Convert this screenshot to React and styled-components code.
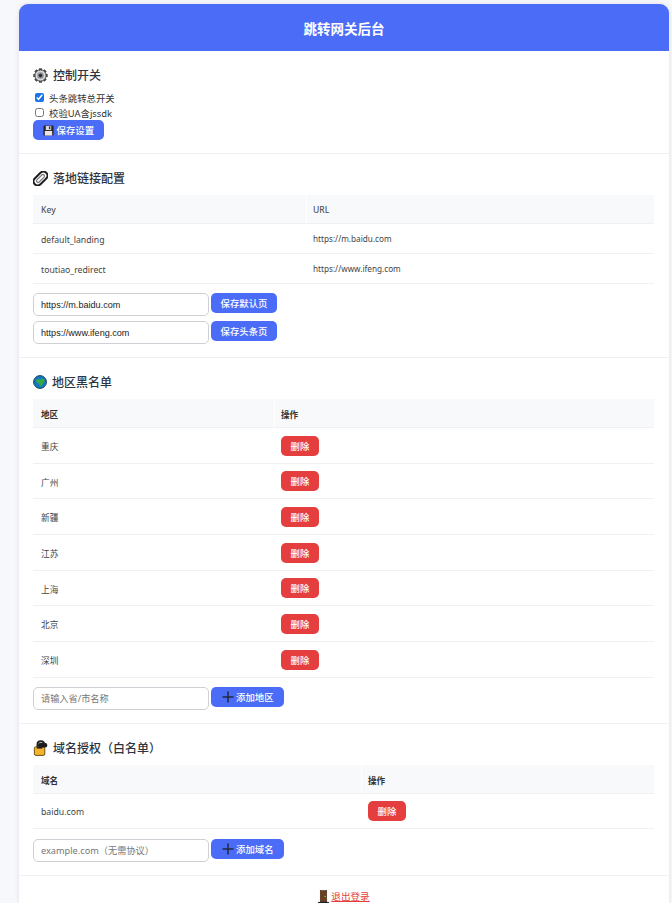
import React from "react";
import styled, { createGlobalStyle } from "styled-components";

const FONT = `"Noto Sans", "Noto Sans CJK SC", sans-serif`;

const Global = createGlobalStyle`
  html, body { margin: 0; padding: 0; background: #f6f8fb; }
  body { font-family: ${FONT}; height: 903px; overflow: hidden; }
  * { box-sizing: border-box; }
`;

const Page = styled.div`
  padding: 4px 3px 0 19px;
`;
const Card = styled.main`
  background: #fff;
  border-radius: 9px 9px 0 0;
  box-shadow: 0 0 5px rgba(0, 0, 0, 0.1);
`;
const Header = styled.header`
  height: 47px;
  background: #4a6cf7;
  color: #fff;
  border-radius: 9px 9px 0 0;
  display: flex;
  align-items: center;
  justify-content: center;
  font-size: 13.5px;
  font-weight: 700;
`;
const Section = styled.section`
  padding: 14px 15px 0 14px;
  height: ${(p) => p.$height}px;
  border-bottom: 1px solid #edeff2;
`;
const Heading = styled.h2`
  margin: 0 0 ${(p) => p.$gap ?? 8}px;
  height: 20px;
  display: flex;
  align-items: center;
  gap: 5px;
  font-size: 12px;
  line-height: 19px;
  font-weight: 500;
  color: #2d3440;
`;
const CheckRow = styled.label`
  display: flex;
  align-items: center;
  height: 15px;
  font-size: 9.4px;
  color: #333;
`;
const Check = styled.input`
  width: 9px;
  height: 9px;
  margin: 0 5px 0 2px;
  accent-color: #1a73e8;
`;
const Button = styled.button`
  height: 20px;
  border: 0;
  border-radius: 5px;
  padding: 0 ${(p) => p.$pad ?? 9.5}px;
  background: ${(p) => (p.$danger ? "#e53e3e" : "#4a6cf7")};
  color: #fff;
  font-family: ${FONT};
  font-size: 9.4px;
  font-weight: 500;
  display: inline-flex;
  align-items: center;
  gap: 3px;
  white-space: nowrap;
  vertical-align: top;
`;
const Table = styled.table`
  width: 621px;
  table-layout: fixed;
  border-collapse: separate;
  border-spacing: 0;
  margin-bottom: ${(p) => p.$gap ?? 9}px;
`;
const Th = styled.th`
  height: 29px;
  padding: 2px 6px 0 8px;
  background: #f8f9fb;
  border-bottom: 1px solid #eef0f3;
  text-align: left;
  font-size: 8.6px;
  font-weight: ${(p) => (p.$light ? 500 : 700)};
  color: ${(p) => (p.$light ? "#555" : "#333")};
  & + & {
    border-left: 1px solid #fff;
    padding-left: 6px;
  }
`;
const Td = styled.td`
  height: ${(p) => p.$h}px;
  padding: 2px 7px 0 8px;
  border-bottom: 1px solid #eef0f3;
  font-size: 8.7px;
  color: #444;
`;
const ValueTd = styled(Td)`
  padding: 0 7px;
  font-size: 8.2px;
`;
const ActionTd = styled(Td)`
  padding: 0 7px;
`;
const Form = styled.div`
  display: flex;
  align-items: flex-start;
  gap: 2px;
  margin-bottom: ${(p) => p.$gap ?? 0}px;
`;
const Input = styled.input`
  width: 176px;
  height: 23px;
  padding: 0 7px;
  border: 1px solid #cdd1d6;
  border-radius: 5px;
  background: #fff;
  font-family: "Liberation Sans", "Noto Sans CJK SC", sans-serif;
  font-size: 9.1px;
  color: #222;
  &::placeholder { color: #777; font-family: ${FONT}; font-size: 9.2px; }
`;
const Footer = styled.footer`
  display: flex;
  justify-content: center;
  align-items: center;
  gap: 2px;
  padding-top: 13px;
  font-size: 9.6px;
`;
const Logout = styled.a`
  color: #e53e3e;
  text-decoration: underline;
`;

const teeth = [0, 45, 90, 135, 180, 225, 270, 315];
const Gear = () => (
  <svg width="15" height="15" viewBox="0 0 24 24">
    {teeth.map((a) => (
      <rect key={a} x="9.5" y="0.5" width="5" height="5" fill="#444" transform={`rotate(${a} 12 12)`} />
    ))}
    <circle cx="12" cy="12" r="9" fill="#d9dade" stroke="#444" strokeWidth="1.6" />
    <circle cx="12" cy="12" r="5.6" fill="#8c8e94" stroke="#c4c5c9" strokeWidth="1" />
    <circle cx="12" cy="12" r="2.8" fill="#2c2c30" />
  </svg>
);
const Clip = () => (
  <svg width="15" height="15" viewBox="0 0 24 24" fill="none">
    <g transform="rotate(45 12 12)">
      <rect x="5.5" y="-1" width="13" height="26" rx="6.5" stroke="#1d1d20" strokeWidth="3.2" />
      <rect x="9.5" y="4" width="5" height="16" rx="2.5" stroke="#77787d" strokeWidth="2" />
    </g>
  </svg>
);
const Globe = () => (
  <svg width="14" height="14" viewBox="0 0 24 24">
    <circle cx="12" cy="12" r="11" fill="#1578bd" stroke="#0b3c63" strokeWidth="1.6" />
    <path fill="#35a84a" d="M5 10c2-3 5-3 7-2 3-2 6-2 8 1 .5 2-2 4-3 5-1 3-3 5-4 6-1-3-3-5-4-6-2-1-4-2-4-4z" />
  </svg>
);
const LockKey = () => (
  <svg width="15" height="16" viewBox="0 0 24 26">
    <path fill="none" stroke="#222" strokeWidth="3" d="M7 13V7C7 3.500 9.500 2 12.500 2S18 3.500 18 7v3" />
    <rect x="2" y="11" width="17" height="14" rx="2.500" fill="#f4b32a" stroke="#5d430c" strokeWidth="1.500" />
    <rect x="8" y="5" width="15" height="7" rx="3" fill="#1c1c1f" />
    <rect x="6" y="11" width="9" height="3" fill="#222" />
  </svg>
);
const Floppy = () => (
  <svg width="11" height="11" viewBox="0 0 24 24">
    <rect x="1" y="1" width="22" height="22" rx="2" fill="#222" />
    <rect x="6" y="2" width="12" height="9" fill="#d7d7de" />
    <rect x="4" y="13" width="16" height="10" fill="#efe3e6" />
    <rect x="13" y="3" width="3" height="6" fill="#333" />
  </svg>
);
const PlusIcon = styled.svg`
  margin-left: 1px;
  margin-right: -1px;
`;
const Plus = () => (
  <PlusIcon width="12" height="12" viewBox="0 0 24 24">
    <path d="M12 1v22M1 12h22" stroke="#23293d" strokeWidth="3" fill="none" />
  </PlusIcon>
);
const Door = () => (
  <svg width="11" height="13" viewBox="0 0 20 24">
    <rect x="4" y="1" width="12" height="21" fill="#6b3f20" stroke="#3c2412" strokeWidth="1" />
    <circle cx="13" cy="12" r="1.200" fill="#d9b24a" />
    <rect x="0" y="22" width="20" height="2" fill="#222" />
  </svg>
);

const regions = [["重庆", 36], ["广州", 35], ["新疆", 36], ["江苏", 36], ["上海", 35], ["北京", 36], ["深圳", 36]];

export default function App() {
  return (
    <>
      <Global />
      <Page>
        <Card>
          <Header>跳转网关后台</Header>
          <Section $height={103}>
            <Heading $gap={5}><Gear />控制开关</Heading>
            <CheckRow><Check type="checkbox" defaultChecked />头条跳转总开关</CheckRow>
            <CheckRow><Check type="checkbox" />校验UA含jssdk</CheckRow>
            <Button>
              <Floppy />保存设置
            </Button>
          </Section>
          <Section $height={204}>
            <Heading $gap={7}><Clip />落地链接配置</Heading>
            <Table>
              <colgroup><col width="273" /><col /></colgroup>
              <thead>
                <tr><Th $light>Key</Th><Th $light>URL</Th></tr>
              </thead>
              <tbody>
                <tr><Td $h={30}>default_landing</Td><ValueTd $h={30}>https://m.baidu.com</ValueTd></tr>
                <tr><Td $h={30}>toutiao_redirect</Td><ValueTd $h={30}>https://www.ifeng.com</ValueTd></tr>
              </tbody>
            </Table>
            <Form $gap={5}><Input defaultValue="https://m.baidu.com" /><Button>保存默认页</Button></Form>
            <Form><Input defaultValue="https://www.ifeng.com" /><Button>保存头条页</Button></Form>
          </Section>
          <Section $height={366}>
            <Heading $gap={7}><Globe />地区黑名单</Heading>
            <Table>
              <colgroup><col width="241" /><col /></colgroup>
              <thead>
                <tr><Th>地区</Th><Th>操作</Th></tr>
              </thead>
              <tbody>
                {regions.map(([name, h]) => (
                  <tr key={name}><Td $h={h}>{name}</Td><ActionTd $h={h}><Button $danger>删除</Button></ActionTd></tr>
                ))}
              </tbody>
            </Table>
            <Form><Input placeholder="请输入省/市名称" /><Button $pad={10}><Plus />添加地区</Button></Form>
          </Section>
          <Section $height={152}>
            <Heading $gap={7}><LockKey />域名授权（白名单）</Heading>
            <Table $gap={10}>
              <colgroup><col width="328" /><col /></colgroup>
              <thead>
                <tr><Th>域名</Th><Th>操作</Th></tr>
              </thead>
              <tbody>
                <tr><Td $h={35}>baidu.com</Td><ActionTd $h={35}><Button $danger>删除</Button></ActionTd></tr>
              </tbody>
            </Table>
            <Form><Input placeholder="example.com（无需协议）" /><Button $pad={10}><Plus />添加域名</Button></Form>
          </Section>
          <Footer><Door /><Logout href="#">退出登录</Logout></Footer>
        </Card>
      </Page>
    </>
  );
}
